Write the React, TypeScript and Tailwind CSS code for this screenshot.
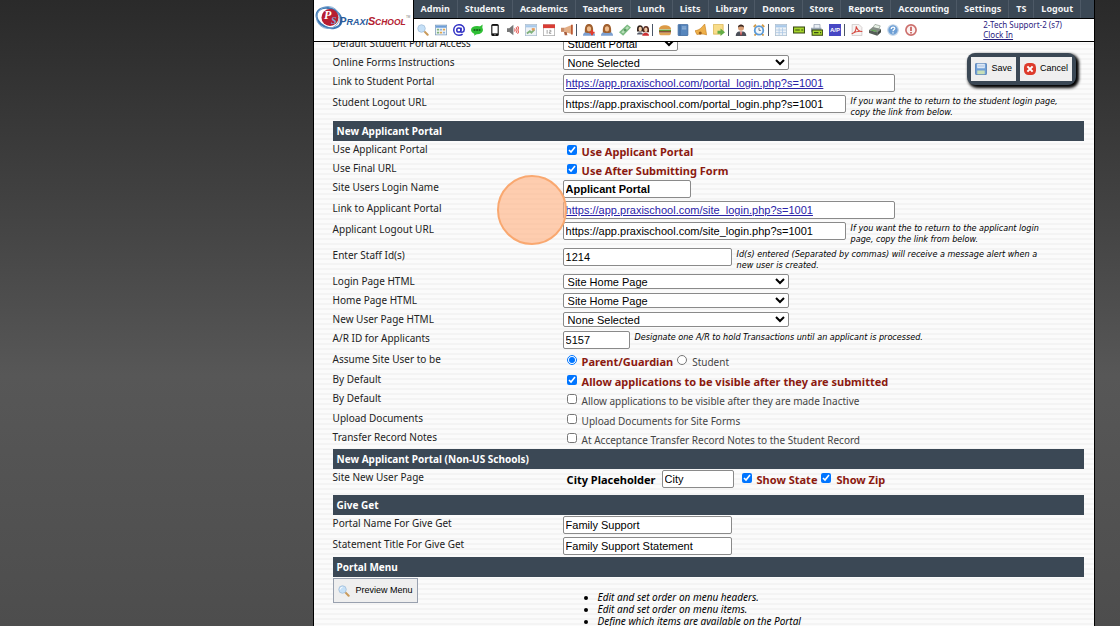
import { type ReactNode } from "react";

const menu = [
  "Admin", "Students", "Academics", "Teachers", "Lunch", "Lists", "Library", "Donors",
  "Store", "Reports", "Accounting", "Settings", "TS", "Logout",
];

function Magnifier() {
  return (
    <svg viewBox="0 0 16 16" className="size-3 shrink-0" aria-hidden="true">
      <path d="M9.5 9.5l4.700 4.700" stroke="#c99a5b" strokeWidth="2.800" strokeLinecap="round" />
      <circle cx="6" cy="6" r="5" fill="#c5e0f7" stroke="#a8c3dd" strokeWidth="1.200" />
      <path d="M3 6a3 3 0 0 1 3-3" stroke="#fff" strokeWidth="1.200" fill="none" />
    </svg>
  );
}

function Person() {
  return (
    <>
      <path d="M0 15.500c0-4 3-5.500 8-5.500s8 1.500 8 5.500z" fill="#7b9fd0" />
      <path d="M2.500 11C2 3 4 0 8 0s6 3 5.500 11l-3 1h-5z" fill="#a0602f" />
      <ellipse cx="8" cy="6.500" rx="2.800" ry="3.600" fill="#f0bd8d" />
    </>
  );
}

function Sheet() {
  return (
    <>
      <rect x="0.500" y="0.500" width="15" height="15" fill="#eef2f6" stroke="#a9bccd" />
      <path d="M1 3h14" stroke="#a9c9ea" strokeWidth="3" />
    </>
  );
}

type Tool = { name: string; art: ReactNode; divider?: boolean };

const tools: Tool[] = [
  {
    name: "Search",
    art: (
      <>
        <path d="M9.500 9.500l4.700 4.700" stroke="#c99a5b" strokeWidth="2.800" strokeLinecap="round" />
        <circle cx="6" cy="6" r="5" fill="#c5e0f7" stroke="#a8c3dd" strokeWidth="1.200" />
      </>
    ),
  },
  {
    name: "Calendar",
    art: (
      <>
        <rect x="0.500" y="1.500" width="15" height="13" fill="#f4f8fb" stroke="#7d9bb8" />
        <path d="M1 3.500h14" stroke="#6f9fd8" strokeWidth="3" />
        <path d="M2.500 7.500h3M2.500 11.500h3" stroke="#7fb27a" strokeWidth="2.400" />
        <path d="M6.500 7.500h3M10.500 11.500h3" stroke="#8fb3dd" strokeWidth="2.400" />
        <path d="M10.500 7.500h3M6.500 11.500h3" stroke="#e2a64e" strokeWidth="2.400" />
      </>
    ),
  },
  {
    name: "Email",
    art: (
      <g fill="none" stroke="#3030c4" strokeWidth="2">
        <circle cx="7.800" cy="8" r="2.800" />
        <path d="M10.900 4.800l-.6 5c0 2 4.700 1.500 4.700-2.500C15 3.500 12 1 8 1 4 1 1 4 1 8s3 7 7 7c2 0 3.500-.5 4.800-1.500" />
      </g>
    ),
  },
  {
    name: "Text message",
    art: (
      <>
        <ellipse cx="8" cy="8" rx="8" ry="5.500" fill="#2fbf35" />
        <path d="M5 11l-1 4.500 5-3zM11 4l4.500-3.500-.5 5z" fill="#2fbf35" />
        <path d="M3.500 8h9" stroke="#176b1b" strokeWidth="2.400" strokeDasharray="2.400 1" />
      </>
    ),
  },
  {
    name: "Phone",
    art: (
      <>
        <rect x="3" y="0" width="10" height="16" rx="2" fill="#111" />
        <rect x="4.500" y="2.500" width="7" height="10" fill="#fff" />
        <circle cx="8" cy="14.300" r="0.800" fill="#fff" />
      </>
    ),
  },
  {
    name: "Announcements",
    art: (
      <>
        <path d="M0 5.500h3L8.500 1v14L3 10.500H0z" fill="#777" />
        <path d="M10 6q1.500 2 0 4M12 4.500q3 3.500 0 7M14 3q4 5 0 10" stroke="#e2504a" strokeWidth="1.400" fill="none" />
      </>
    ),
  },
  {
    name: "Bulletin",
    art: (
      <>
        <Sheet />
        <path d="M2.500 12.500l4-3 2 2 4-4" stroke="#7fb27a" strokeWidth="2.500" fill="none" />
        <path d="M9 7h4" stroke="#e89b5b" strokeWidth="3" />
      </>
    ),
  },
  {
    name: "Events",
    art: (
      <>
        <rect x="0.500" y="1" width="15" height="14.500" fill="#fff" stroke="#aaa" />
        <path d="M0 0.500h16v5H0z" fill="#d93c34" />
        <path d="M5.500 8v5M8.500 8.500h2v2h-2v2h2.500" stroke="#999" strokeWidth="1.200" fill="none" />
      </>
    ),
  },
  {
    name: "Megaphone",
    divider: true,
    art: (
      <>
        <path d="M0 5h5v5.500H0z" fill="#c98b67" />
        <path d="M5 5l10-4v12.500l-10-3z" fill="#e3ae85" />
        <path d="M14.500 1v13" stroke="#bd5b35" strokeWidth="2.400" />
        <path d="M4 10.500h3.500l1 4.500H5z" fill="#a95c3c" />
      </>
    ),
  },
  {
    name: "Add student",
    art: (
      <>
        <Person />
        <path d="M12 8v7M8.500 11.500h7" stroke="#e23b2e" strokeWidth="2.600" />
      </>
    ),
  },
  { name: "Student", art: <Person /> },
  {
    name: "Payments",
    art: (
      <>
        <path d="M0 11L11 0.500l5 4L5.500 15.500z" fill="#7cba82" />
        <path d="M3 11L11 3 13.500 5 5.500 12.800z" fill="#b9dfb9" />
        <circle cx="8.200" cy="8" r="2" fill="#579a60" />
      </>
    ),
  },
  {
    name: "Families",
    divider: true,
    art: (
      <>
        <path d="M0 6c0-6 8-6 8 0v4H0z" fill="#2f211b" />
        <path d="M8 7c0-6 8-6 8 0v4H8z" fill="#55261c" />
        <ellipse cx="4.300" cy="6.500" rx="2.200" ry="3" fill="#f2c9a6" />
        <ellipse cx="11.800" cy="7.500" rx="2.200" ry="3" fill="#f2c9a6" />
        <path d="M0 14c0-4 8-4 8 0z" fill="#555b6a" />
        <path d="M7 15.500c0-5 9-5 9 0z" fill="#cc2f33" />
      </>
    ),
  },
  {
    name: "Lunch",
    art: (
      <>
        <path d="M0 7c0-7 16-7 16 0z" fill="#dc9a45" />
        <path d="M0 8.500h16" stroke="#5e9a35" strokeWidth="2" />
        <path d="M0 10.500h16" stroke="#7a3b1b" strokeWidth="2" />
        <path d="M0 11.500h16c0 3-2 3.500-4 3.500H4c-2 0-4-.5-4-3.500z" fill="#dfa557" />
      </>
    ),
  },
  {
    name: "Library",
    art: (
      <>
        <rect x="1.500" y="0.500" width="13" height="15" rx="1" fill="#5686bd" stroke="#39649a" />
        <path d="M4 1v14" stroke="#33598b" />
        <path d="M6.500 4h6M6.500 6.500h6" stroke="#bcd4ee" />
      </>
    ),
  },
  {
    name: "Bell",
    art: (
      <>
        <path d="M0 9C7 8 9 4 13 0l2.500 14.500c-5-2-9-1-13-.5z" fill="#eeb04a" stroke="#c47e1e" strokeWidth="0.800" />
        <circle cx="7" cy="12" r="2" fill="#9c5f1b" />
      </>
    ),
  },
  {
    name: "Send note",
    divider: true,
    art: (
      <>
        <path d="M0.500 0.500h13v10l-3 3h-10z" fill="#f8dc89" stroke="#d7b14e" />
        <path d="M6 9h4V6l6 5-6 5v-3H6z" fill="#63ad48" />
      </>
    ),
  },
  {
    name: "Staff",
    art: (
      <>
        <path d="M1 16c0-5 3-6.500 7-6.500s7 1.500 7 6.500z" fill="#4b4f59" />
        <path d="M6 9.500h4L8 15z" fill="#fff" />
        <path d="M8 10v5" stroke="#c8322e" strokeWidth="1.600" />
        <circle cx="8" cy="5" r="4" fill="#d9a077" />
        <path d="M4 4.500C4-.5 12-.5 12 4.500 10 3 6 3 4 4.500z" fill="#3d2b25" />
      </>
    ),
  },
  {
    name: "Time clock",
    divider: true,
    art: (
      <>
        <path d="M1 4l3-3M15 4l-3-3M4 13l-2 2.500M12 13l2 2.500" stroke="#d39a46" strokeWidth="2.400" />
        <circle cx="8" cy="8.500" r="5.700" fill="#f2f8fd" stroke="#5c9ad6" strokeWidth="2.400" />
        <path d="M8 5v3.500h2.500" stroke="#555" fill="none" />
      </>
    ),
  },
  {
    name: "Table",
    art: (
      <>
        <Sheet />
        <path d="M1 8h14M1 11.500h14M5.500 5v10M10 5v10" stroke="#a9c6e4" />
      </>
    ),
  },
  {
    name: "Check",
    art: (
      <>
        <rect x="0.700" y="4" width="14.600" height="8" fill="#a6d62c" stroke="#3a4a16" strokeWidth="1.400" />
        <path d="M3 8h6M11 8h2.500" stroke="#3a4a16" strokeWidth="1.600" />
      </>
    ),
  },
  {
    name: "Print check",
    art: (
      <>
        <path d="M4 0.500h8V6H4z" fill="#e9eef4" stroke="#8d9aa9" />
        <path d="M0 5h14v6H0z" fill="#9aa6b4" />
        <rect x="1.500" y="8" width="14" height="7" fill="#a6d62c" stroke="#3a4a16" strokeWidth="1.400" />
        <path d="M4 11.500h6M12 11.500h1.500" stroke="#3a4a16" strokeWidth="1.400" />
      </>
    ),
  },
  {
    name: "Accounts payable",
    divider: true,
    art: (
      <>
        <rect x="0" y="0" width="16" height="16" fill="#4747c4" />
        <text x="8" y="11" fill="#fff" fontSize="8" fontWeight="bold" textAnchor="middle" fontFamily="Liberation Sans">A/P</text>
      </>
    ),
  },
  {
    name: "PDF",
    art: (
      <>
        <path d="M1.500 0.500h9l4 4v11h-13z" fill="#f6f3f2" stroke="#c9c2c0" />
        <path d="M1 13c4-1 6-5 6-10 1 5 3 7 8 7-5-1-9 0-14 3z" fill="none" stroke="#d5433a" strokeWidth="1.400" />
      </>
    ),
  },
  {
    name: "Print",
    art: (
      <>
        <path d="M5 5l3-4.500 7 2L13 7z" fill="#e8f1e6" stroke="#7e8a7e" strokeWidth="0.800" />
        <path d="M0 8l5-4 11 2.500L11 11z" fill="#858d86" />
        <path d="M0 8l11 3v4.500L0 12z" fill="#555d57" />
        <path d="M11 11l5-4.500V11l-5 4.500z" fill="#3f4641" />
        <path d="M3 8l7 1.800" stroke="#5fa64f" strokeWidth="1.600" />
      </>
    ),
  },
  {
    name: "Help",
    art: (
      <>
        <circle cx="8" cy="8" r="7" fill="#6d9fd5" stroke="#c5d6e8" strokeWidth="1.600" />
        <path d="M5.700 6.500c0-3.500 5-3 4.600-.3C10 7.800 8 7.800 8 9.800M8 11v1.800" stroke="#fff" strokeWidth="1.700" fill="none" />
      </>
    ),
  },
  {
    name: "Alerts",
    art: (
      <>
        <circle cx="8" cy="8" r="6.800" fill="#fbf1f0" stroke="#cc6f6c" strokeWidth="2.200" />
        <path d="M8 3.800v5.400M8 10.500v2" stroke="#c04844" strokeWidth="2" />
      </>
    ),
  },
];

function Logo() {
  return (
    <svg viewBox="0 0 99 40" className="h-10 w-[99px] shrink-0" role="img" aria-label="PraxiSchool">
      <g fill="none" stroke="#3f79b5">
        <ellipse cx="15" cy="18" rx="13" ry="9.500" strokeWidth="2" transform="rotate(25 15 18)" />
        <ellipse cx="14" cy="17.500" rx="11.500" ry="11" strokeWidth="1" stroke="#7ba5cf" />
      </g>
      <circle cx="16" cy="17.500" r="8.500" fill="#b71d31" />
      <text x="10" y="19" fontFamily="Liberation Serif" fontStyle="italic" fontWeight="bold" fontSize="12" fill="#fff">P</text>
      <text x="17" y="24" fontFamily="Liberation Serif" fontStyle="italic" fontWeight="bold" fontSize="10" fill="#7ea6d8">S</text>
      <g fontFamily="Liberation Sans" fontStyle="italic" fontWeight="bold">
        <text x="25" y="25" fontSize="11" fill="#2a5b9c">P</text>
        <text x="32.500" y="25" fontSize="9" fill="#2a5b9c">RAXI</text>
        <text x="54" y="25" fontSize="11" fill="#b3202f">S</text>
        <text x="61" y="25" fontSize="8.500" fill="#b3202f">CHOOL</text>
      </g>
      <text x="92" y="18" fontSize="3" fill="#777" fontFamily="Liberation Sans">TM</text>
    </svg>
  );
}

function Header() {
  return (
    <header className="relative z-10 flex border-b border-black bg-white">
      <div className="border-r border-black">
        <Logo />
      </div>
      <div className="min-w-0 flex-1">
        <nav className="flex h-[19px] border-b border-black bg-[#3b4855] text-[9px] font-bold text-gray-100">
          {menu.map((item) => (
            <a key={item} href="#" className="flex items-center border-r border-[#4d5966] px-[7px]">
              {item}
            </a>
          ))}
        </nav>
        <div className="flex h-[22px] items-center justify-between">
          <div className="flex items-center">
            {tools.map((tool) => (
              <span key={tool.name} className={tool.divider ? "mr-[3px] flex border-r border-gray-600" : "flex"}>
                <button type="button" aria-label={tool.name} className="px-[3px]">
                  <svg viewBox="0 0 16 16" className="size-3" aria-hidden="true">
                    {tool.art}
                  </svg>
                </button>
              </span>
            ))}
          </div>
          <div className="mr-8 text-[8px] leading-[10px] text-[#2b2380]">
            <p>2-Tech Support-2 (s7)</p>
            <a href="#" className="block underline">Clock In</a>
          </div>
        </div>
      </div>
    </header>
  );
}

function Bar({ children }: { children: ReactNode }) {
  return (
    <h2 className="flex h-5 items-center bg-[#3b4855] px-1 text-[10px] font-bold text-white">
      {children}
    </h2>
  );
}

const rowHeights = {
  select: "h-[19px]",
  input: "h-[21px]",
  compact: "h-[19px]",
  check: "h-5",
  tall: "h-[26px]",
};

type RowProps = { label: string; id?: string; size: keyof typeof rowHeights; children: ReactNode };

function Row({ label, id, size, children }: RowProps) {
  return (
    <div className={`flex ${rowHeights[size]}`}>
      <label htmlFor={id} className="w-[230px] shrink-0 pt-px leading-[14px]">
        {label}
      </label>
      <div className="flex min-w-0 flex-1 items-start pt-px">{children}</div>
    </div>
  );
}

function TextBox({ id, value, className }: { id: string; value: string; className: string }) {
  return (
    <input
      id={id}
      defaultValue={value}
      className={`h-[18px] rounded-xs border border-[#8a8a8a] bg-white px-0.5 font-['Liberation_Sans',sans-serif] text-[11px] ${className}`}
    />
  );
}

function Select({ id, value, className }: { id: string; value: string; className: string }) {
  return (
    <select
      id={id}
      className={`h-[15px] rounded-xs border border-[#8a8a8a] bg-white font-['Liberation_Sans',sans-serif] text-[11px] leading-none text-black ${className}`}
    >
      <option>{value}</option>
    </select>
  );
}

function Hint({ children }: { children: ReactNode }) {
  return (
    <p className="pt-px pl-[5px] font-['DejaVu_Sans_Condensed','DejaVu_Sans',sans-serif] text-[9px] leading-[11px] whitespace-nowrap text-black italic">
      {children}
    </p>
  );
}

type CheckProps = { id: string; label: string; on?: boolean; type?: "checkbox" | "radio" };

function Check({ id, label, on = false, type = "checkbox" }: CheckProps) {
  return (
    <span className="flex items-start pl-1">
      <input id={id} name={type === "radio" ? "assume" : id} type={type} defaultChecked={on} className="mt-[3px] size-2.5" />
      <label
        htmlFor={id}
        className={on ? "pt-[3px] pl-[5px] text-[11px] leading-[14px] font-bold text-[#8b1a10]" : "pt-[3px] pl-[5px] leading-[14px] text-[#444]"}
      >
        {label}
      </label>
    </span>
  );
}

function Actions() {
  return (
    <div className="absolute top-[53px] right-[18px] z-20 flex gap-1 rounded-lg bg-[#3b4855] p-1 font-['Liberation_Sans',sans-serif] text-[9px] text-black shadow-[2px_2px_3px_1px_#000]">
      <button type="button" className="flex h-6 items-center gap-1 bg-[#efefef] px-1">
        <svg viewBox="0 0 16 16" className="size-3" aria-hidden="true">
          <rect x="0.500" y="0.500" width="15" height="15" rx="1.500" fill="#6f9fd6" stroke="#4673ad" />
          <path d="M3 1h10v6H3z" fill="#eaf2fb" />
          <path d="M4 3h8M4 5h8" stroke="#a4bfdd" />
          <path d="M3 10h10v5H3z" fill="#c8dfb8" />
        </svg>
        Save
      </button>
      <button type="button" className="flex h-6 items-center gap-1 bg-[#efefef] px-1">
        <svg viewBox="0 0 16 16" className="size-3" aria-hidden="true">
          <rect width="16" height="16" rx="6" fill="#dd3b2c" />
          <path d="M4.500 4.500l7 7M11.500 4.500l-7 7" stroke="#fff" strokeWidth="2.800" />
        </svg>
        Cancel
      </button>
    </div>
  );
}

export default function App() {
  return (
    <div className="h-screen overflow-hidden bg-linear-to-b from-[#2a2a2a] via-[#575757] via-60% to-[#4d4d4d] font-['Noto_Sans',sans-serif] text-[10px] text-[#222]">
      <div className="relative mr-[25px] ml-[28%] h-full overflow-hidden border-r border-black bg-[repeating-linear-gradient(#fbfbfb_0_3px,#f4f4f4_3px_5px)] shadow-[-1px_0_0_#000]">
        <Header />
        <Actions />
        <main className="-mt-[7px] pr-2.5 pl-[19px]">
          <section className="pb-px">
            <Row label="Default Student Portal Access" id="access" size="select">
              <Select id="access" value="Student Portal" className="w-[115px]" />
            </Row>
            <Row label="Online Forms Instructions" id="instructions" size="select">
              <Select id="instructions" value="None Selected" className="w-[226px]" />
            </Row>
            <Row label="Link to Student Portal" id="student-link" size="input">
              <TextBox id="student-link" value="https://app.praxischool.com/portal_login.php?s=1001" className="w-[332px] text-[#2a22a8] underline" />
            </Row>
            <Row label="Student Logout URL" id="student-logout" size="tall">
              <TextBox id="student-logout" value="https://app.praxischool.com/portal_login.php?s=1001" className="w-[283px] text-black" />
              <Hint>If you want the to return to the student login page,<br />copy the link from below.</Hint>
            </Row>
          </section>

          <section>
            <Bar>New Applicant Portal</Bar>
            <Row label="Use Applicant Portal" size="compact">
              <Check id="use-portal" label="Use Applicant Portal" on />
            </Row>
            <Row label="Use Final URL" size="compact">
              <Check id="use-final" label="Use After Submitting Form" on />
            </Row>
            <Row label="Site Users Login Name" id="login-name" size="input">
              <TextBox id="login-name" value="Applicant Portal" className="w-32 font-bold text-black" />
            </Row>
            <Row label="Link to Applicant Portal" id="applicant-link" size="input">
              <TextBox id="applicant-link" value="https://app.praxischool.com/site_login.php?s=1001" className="w-[332px] text-[#2a22a8] underline" />
            </Row>
            <Row label="Applicant Logout URL" id="applicant-logout" size="tall">
              <TextBox id="applicant-logout" value="https://app.praxischool.com/site_login.php?s=1001" className="w-[283px] text-black" />
              <Hint>If you want the to return to the applicant login<br />page, copy the link from below.</Hint>
            </Row>
            <Row label="Enter Staff Id(s)" id="staff" size="tall">
              <TextBox id="staff" value="1214" className="w-[169px] text-black" />
              <Hint>Id(s) entered (Separated by commas) will receive a message alert when a<br />new user is created.</Hint>
            </Row>
            <Row label="Login Page HTML" id="login-html" size="select">
              <Select id="login-html" value="Site Home Page" className="w-[226px]" />
            </Row>
            <Row label="Home Page HTML" id="home-html" size="select">
              <Select id="home-html" value="Site Home Page" className="w-[226px]" />
            </Row>
            <Row label="New User Page HTML" id="new-html" size="select">
              <Select id="new-html" value="None Selected" className="w-[226px]" />
            </Row>
            <Row label="A/R ID for Applicants" id="ar" size="input">
              <TextBox id="ar" value="5157" className="w-[67px] text-black" />
              <Hint>Designate one A/R to hold Transactions until an applicant is processed.</Hint>
            </Row>
            <Row label="Assume Site User to be" size="check">
              <Check id="parent" label="Parent/Guardian" type="radio" on />
              <Check id="student" label="Student" type="radio" />
            </Row>
            <Row label="By Default" size="compact">
              <Check id="visible" label="Allow applications to be visible after they are submitted" on />
            </Row>
            <Row label="By Default" size="check">
              <Check id="inactive" label="Allow applications to be visible after they are made Inactive" />
            </Row>
            <Row label="Upload Documents" size="compact">
              <Check id="upload" label="Upload Documents for Site Forms" />
            </Row>
            <Row label="Transfer Record Notes" size="check">
              <Check id="transfer" label="At Acceptance Transfer Record Notes to the Student Record" />
            </Row>
          </section>

          <section>
            <Bar>New Applicant Portal (Non-US Schools)</Bar>
            <Row label="Site New User Page" size="tall">
              <label htmlFor="city" className="pt-[3px] pr-1.5 pl-1 text-[11px] leading-[14px] font-bold text-black">City Placeholder</label>
              <TextBox id="city" value="City" className="mr-1 w-[72px] text-black" />
              <Check id="state" label="Show State" on />
              <Check id="zip" label="Show Zip" on />
            </Row>
          </section>

          <section>
            <Bar>Give Get</Bar>
            <Row label="Portal Name For Give Get" id="portal-name" size="input">
              <TextBox id="portal-name" value="Family Support" className="w-[169px] text-black" />
            </Row>
            <Row label="Statement Title For Give Get" id="statement" size="input">
              <TextBox id="statement" value="Family Support Statement" className="w-[169px] text-black" />
            </Row>
          </section>

          <section>
            <Bar>Portal Menu</Bar>
            <div className="flex pt-px">
              <button type="button" className="flex h-[25px] items-center gap-1.5 border border-gray-400 bg-[#efefef] px-1 font-['Liberation_Sans',sans-serif] text-[9px] text-black">
                <Magnifier />
                Preview Menu
              </button>
            </div>
            <ul className="-mt-3 list-disc pl-[265px] leading-3 text-black italic">
              <li>Edit and set order on menu headers.</li>
              <li>Edit and set order on menu items.</li>
              <li>Define which items are available on the Portal</li>
            </ul>
          </section>
        </main>
        <div className="pointer-events-none absolute top-[175px] left-[183px] size-[70px] rounded-full border-2 border-[#f9a870] bg-[#ffb486]/65" />
      </div>
    </div>
  );
}
